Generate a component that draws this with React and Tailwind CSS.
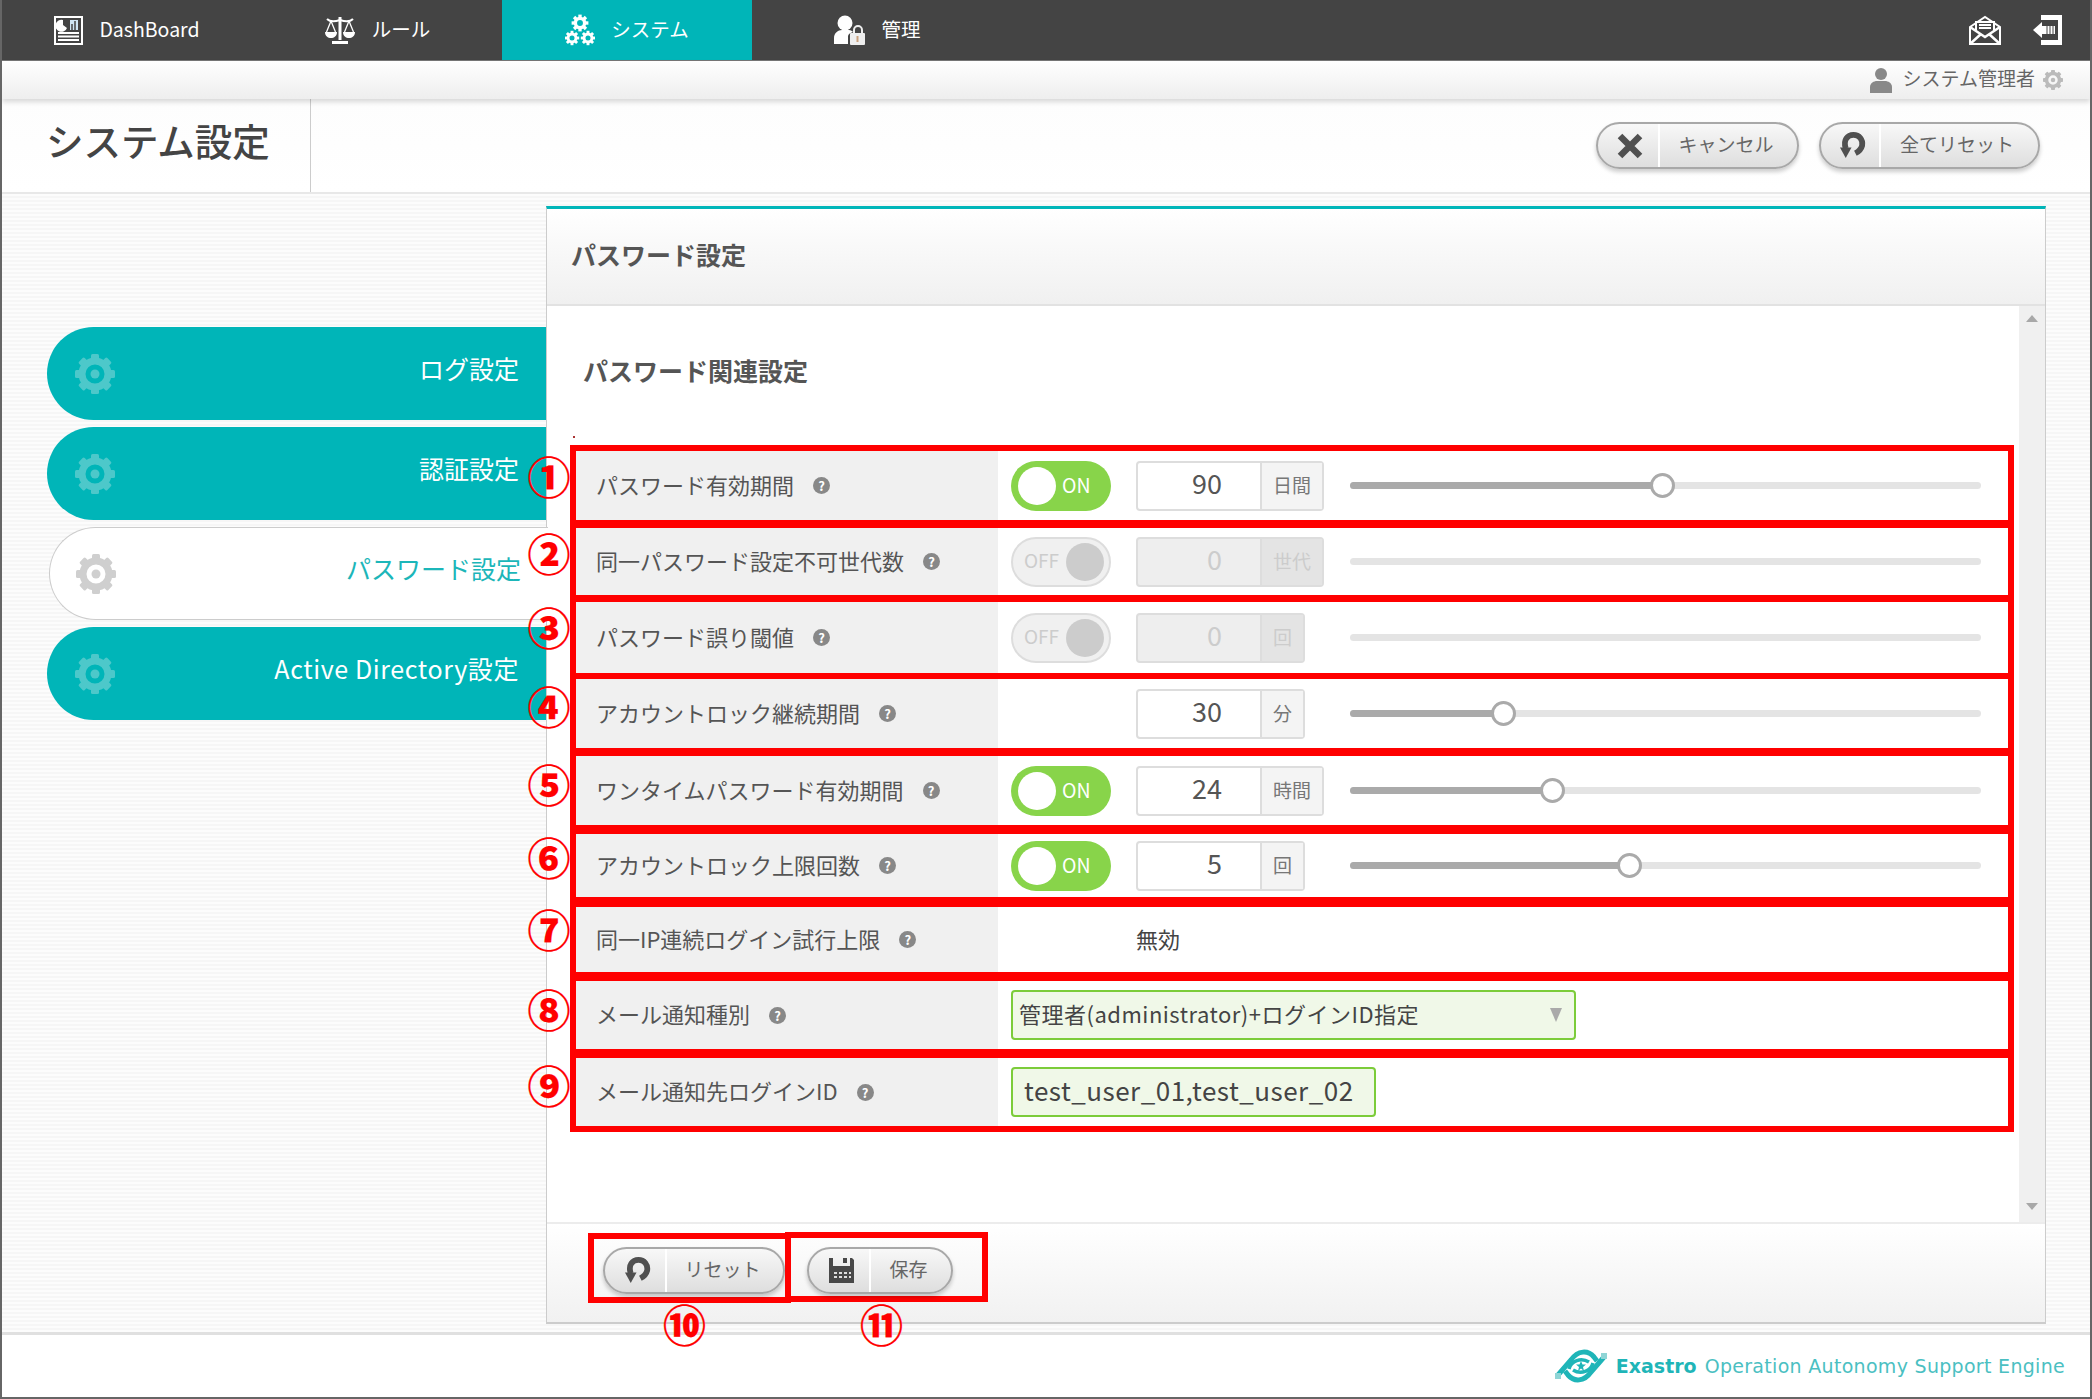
import React from "react";

const Gear = ({ className = "", color = "#fff", size = 40 }) => (
  <svg viewBox="-20 -20 40 40" width={size} height={size} className={className}>
    {[0, 45, 90, 135, 180, 225, 270, 315].map((a) => (
      <rect key={a} x="-4" y="-20" width="8" height="9" rx="1.5" fill={color} transform={`rotate(${a})`} />
    ))}
    <circle r="13" fill="none" stroke={color} strokeWidth="7" />
    <circle r="4.5" fill={color} />
  </svg>
);

const DashIcon = () => (
  <svg viewBox="0 0 29 29" width="29" height="29">
    <rect x="1" y="1" width="27" height="27" fill="#444" stroke="#fff" strokeWidth="2" />
    <path d="M11 4 A6 6 0 1 0 15 12 L11 9Z" fill="#fff" transform="translate(-2,0)" />
    <path d="M16 14h8V4h-8z" fill="#cfe6f5" />
    <path d="M18 14V8M21 14V5" stroke="#444" strokeWidth="1.5" />
    <path d="M4 17h21M4 20.500h21M4 24h21" stroke="#fff" strokeWidth="1.800" />
  </svg>
);

const ScaleIcon = () => (
  <svg viewBox="0 0 32 30" width="32" height="30" fill="none" stroke="#fff">
    <path d="M16 2v23" strokeWidth="3" />
    <path d="M3 4c3 3 7 3 13 1 6 2 10 2 13-1" strokeWidth="2" />
    <path d="M7 6 2.500 17M7 6l4.500 11M25 6l-4.500 11M25 6l4.500 11" strokeWidth="1.300" />
    <path d="M1 17h12c0 8-12 8-12 0zM19 17h12c0 8-12 8-12 0z" fill="#fff" stroke="none" />
    <path d="M8 26h16v3H8z" fill="#fff" stroke="none" />
  </svg>
);

const Gears = () => (
  <>
    {[0, 45, 90, 135, 180, 225, 270, 315].map((a) => (
      <rect key={a} x="-4" y="-20" width="8" height="9" fill="#fff" transform={`rotate(${a})`} />
    ))}
    <circle r="11" fill="none" stroke="#fff" strokeWidth="8" />
  </>
);

const TripleGear = () => (
  <svg viewBox="0 0 30 32" width="30" height="32">
    <g transform="translate(15 9) scale(.42)"><Gears /></g>
    <g transform="translate(7 24) scale(.36)"><Gears /></g>
    <g transform="translate(23 24) scale(.36)"><Gears /></g>
  </svg>
);

const AdminIcon = () => (
  <svg viewBox="0 0 32 30" width="32" height="30">
    <circle cx="12" cy="8" r="7.500" fill="#fff" />
    <path d="M1 29v-6c0-5 4-8 8-8h7c2 0 3 1 4 2-4 1-5 3-5 5v7z" fill="#fff" />
    <path d="M21 18v-3a4 4 0 0 1 8 0v3" fill="none" stroke="#eee" strokeWidth="2" />
    <rect x="17" y="18" width="15" height="12" rx="1" fill="#eee" />
    <rect x="23.500" y="21" width="2" height="6" fill="#c9a07c" />
  </svg>
);

const MailIcon = () => (
  <svg viewBox="0 0 32 30" width="32" height="30" fill="none" stroke="#fff" strokeWidth="2">
    <path d="M1 12 16 2l15 10v17H1z" fill="#444" />
    <path d="M7 15V7h18v8" fill="#444" />
    <path d="M10 10h12M10 13h12" strokeWidth="1.800" />
    <path d="M1 12l15 10 15-10M1 29l11-10M31 29 20 19" strokeWidth="2.500" />
  </svg>
);

const ExitIcon = () => (
  <svg viewBox="0 0 30 32" width="30" height="32">
    <path d="M8 1h21v30H8v-5h17V6H8z" fill="#fff" />
    <path d="M0 16 9 8v4h13v8H9v4z" fill="#fff" />
    <path d="M14 12v8M17 12v8M20 12v8" stroke="#444" strokeWidth="1" />
  </svg>
);

const PersonIcon = () => (
  <svg viewBox="0 0 22 26" width="22" height="26" fill="#888">
    <circle cx="11" cy="7" r="6" />
    <path d="M0 26v-6c0-4 4-6 7-6h8c3 0 7 2 7 6v6z" />
  </svg>
);

const ResetIcon = () => (
  <svg viewBox="0 0 28 30" width="27" height="29" fill="none">
    <path d="M7 18C4 9 9 4 15 4s10 5 9 11c-1 4-3 6-7 8" stroke="#505050" strokeWidth="6" />
    <path d="M1 17h12l-6 11z" fill="#505050" />
  </svg>
);

const CrossIcon = () => (
  <svg viewBox="0 0 26 28" width="26" height="28">
    <path d="M3 4l20 20M23 4 3 24" stroke="#505050" strokeWidth="6.500" />
  </svg>
);

const SaveIcon = () => (
  <svg viewBox="0 0 27 27" width="27" height="27">
    <path d="M1 1h4v8h17V1h2l2 2v23H1z" fill="#484848" />
    <path d="M15 1h4v5h-4z" fill="#484848" />
    <path d="M6 16h3M11 16h3M16 16h3M21 16h2M6 20h3M11 20h3M16 20h3M21 20h2" stroke="#ddd" strokeWidth="2" />
  </svg>
);

const Tri = ({ up }) => (
  <svg viewBox="0 0 12 7" width="12" height="7">
    <path d={up ? "M0 7 6 0l6 7z" : "M0 0h12L6 7z"} fill="#a8a8a8" />
  </svg>
);

const SelectArrow = () => (
  <svg viewBox="0 0 12 14" width="12" height="14">
    <path d="M0 0h12L6 14z" fill="#aaa" />
  </svg>
);

const Logo = () => (
  <svg viewBox="0 0 54 36" width="54" height="36" fill="none" stroke="#1fb5b8" strokeWidth="5">
    <path d="M4 27 17 12C24 2 34 2 40 9l3 4" />
    <path d="M50 9 37 24C30 34 20 34 14 27l-3-4" />
    <path d="M15 21c2-8 12-12 20-7" strokeWidth="3.500" />
    <path d="M39 15c-2 8-12 12-20 7" strokeWidth="3.500" />
    <path d="M27 13l1.500 3.500H32l-3 2.500 1 4-3-2.500-3 2.500 1-4-3-2.500h3.500z" fill="#1fb5b8" stroke="none" />
    <path d="M1 25h6v6H1zM47 5h6v6h-6z" fill="#8fd5d6" stroke="none" />
  </svg>
);

const TopTab = ({ icon, label, active }) => (
  <div className={`w-[250px] flex items-center justify-center gap-[16px] text-[19.500px] text-white ${active ? "bg-[#00b5b8]" : ""}`}>
    {icon}
    <span className="pb-[3px]">{label}</span>
  </div>
);

const PillButton = ({ icon, label, width, iconWidth }) => (
  <div className={`${width} h-[47px] flex rounded-full border-2 border-[#a8a8a8] bg-gradient-to-b from-[#f8f8f8] to-[#dedede] shadow-[0_3px_4px_rgba(0,0,0,0.2)] overflow-hidden`}>
    <div className={`${iconWidth} shrink-0 flex items-center justify-center border-r-2 border-white pl-1`}>{icon}</div>
    <div className="flex-1 flex items-center justify-center pr-[5px] pb-[3px] text-[19px] text-[#666]">{label}</div>
  </div>
);

const NavPill = ({ label, active, labelClass = "" }) =>
  active ? (
    <div className="relative z-10 h-[93px] ml-[2px] -mr-[2px] flex items-center justify-between pl-[26px] pr-[27px] rounded-l-full border border-r-0 border-[#ccc] bg-white">
      <Gear color="#cfcfcf" />
      <span className="pb-[10px] text-[25px] text-[#1cb6b9]">{label}</span>
    </div>
  ) : (
    <div className="h-[93px] flex items-center justify-between pl-[28px] pr-[27px] rounded-l-full bg-[#00b5b8]">
      <Gear color="#4dc8ca" />
      <span className={`pb-[10px] text-[25px] text-white ${labelClass}`}>{label}</span>
    </div>
  );

const Help = () => (
  <span className="w-[17px] h-[17px] rounded-full bg-[#888] text-white text-[13px] font-bold flex items-center justify-center leading-none shrink-0">?</span>
);

const Toggle = ({ on }) =>
  on ? (
    <div className="w-[100px] h-[50px] shrink-0 rounded-full bg-[#88d44a] flex items-center pl-[7px] gap-[6px]">
      <span className="w-[38px] h-[38px] rounded-full bg-white" />
      <span className="pb-[2px] text-[19.500px] text-white">ON</span>
    </div>
  ) : (
    <div className="w-[100px] h-[50px] shrink-0 rounded-full bg-[#f0f0f0] border-2 border-[#ddd] flex items-center justify-between pl-[11px] pr-[5px]">
      <span className="pb-[2px] text-[19px] text-[#ccc]">OFF</span>
      <span className="w-[38px] h-[38px] rounded-full bg-[#ccc]" />
    </div>
  );

const NumberBox = ({ value, unit, wide, disabled }) => (
  <div className={`${wide ? "w-[188px]" : "w-[169px]"} h-[50px] flex rounded-[4px] border-2 ${disabled ? "border-[#ddd] bg-[#eee]" : "border-[#ddd] bg-white"}`}>
    <div className={`w-[122px] shrink-0 flex items-center justify-end pr-[38px] pb-[4px] text-[27px] ${disabled ? "text-[#ccc]" : "text-[#555]"}`}>{value}</div>
    <div className={`flex-1 flex items-center justify-center border-l-2 border-[#ddd] text-[19px] ${disabled ? "bg-[#e4e4e4] text-[#ccc]" : "bg-[#f4f4f4] text-[#777]"}`}>{unit}</div>
  </div>
);

const Slider = ({ percent, disabled }) => (
  <div className="relative w-[631px] h-[7px] rounded-full bg-[#e4e4e4]">
    {!disabled && (
      <>
        <div className="h-full rounded-full bg-[#aaa]" style={{ width: `${percent}%` }} />
        <div className="absolute top-[-9px] w-[25px] h-[25px] -ml-[12px] rounded-full bg-white border-[3px] border-[#aaa]" style={{ left: `${percent}%` }} />
      </>
    )}
  </div>
);

const rows = [
  { label: "パスワード有効期間", n: "①", cls: "border-t-[6px] h-[75px]", mark: "top-[-1px]", toggle: true, value: "90", unit: "日間", wide: true, pct: 49.400 },
  { label: "同一パスワード設定不可世代数", n: "②", cls: "border-t-[8px] h-[75px]", mark: "top-[-1px]", toggle: false, value: "0", unit: "世代", wide: true, disabled: true },
  { label: "パスワード誤り閾値", n: "③", cls: "border-t-[7px] h-[78px]", mark: "top-[-1px]", toggle: false, value: "0", unit: "回", disabled: true },
  { label: "アカウントロック継続期間", n: "④", cls: "border-t-[6px] h-[75px]", mark: "top-[1px]", value: "30", unit: "分", pct: 24.200 },
  { label: "ワンタイムパスワード有効期間", n: "⑤", cls: "border-t-[8px] h-[77px]", mark: "top-[2px]", toggle: true, value: "24", unit: "時間", wide: true, pct: 32 },
  { label: "アカウントロック上限回数", n: "⑥", cls: "border-t-[9px] h-[72px]", mark: "top-[-3px]", toggle: true, value: "5", unit: "回", pct: 44.200 },
  { label: "同一IP連続ログイン試行上限", n: "⑦", cls: "border-t-[10px] h-[75px]", mark: "top-[-4px]", text: "無効" },
  { label: "メール通知種別", n: "⑧", cls: "border-t-[9px] h-[77px]", mark: "top-[2px]", select: "管理者(administrator)+ログインID指定" },
  { label: "メール通知先ログインID", n: "⑨", cls: "border-t-[9px] h-[83px] border-b-[6px]", mark: "top-[1px]", input: "test_user_01,test_user_02" },
];

const markText = "text-[43px] leading-[50px] font-black text-[#ff0000] [-webkit-text-stroke:0.2px_#ff0000]";

const Row = ({ r }) => (
  <div className={`relative flex border-x-[6px] border-[#ff0000] ${r.cls}`}>
    <span className={`absolute z-30 left-[-49px] ${r.mark} w-[44px] text-center ${markText}`}>{r.n}</span>
    <div className="w-[422px] shrink-0 bg-[#f0f0f0] flex items-center gap-[19px] pl-[20px] text-[22px] text-[#555]">
      <span className="pb-[3px]">{r.label}</span>
      <Help />
    </div>
    <div className="flex-1 flex items-center pl-[13px]">
      {r.value !== undefined && (
        <>
          <div className="w-[100px] shrink-0">{r.toggle !== undefined && <Toggle on={r.toggle} />}</div>
          <div className="w-[239px] shrink-0 pl-[25px]">
            <NumberBox value={r.value} unit={r.unit} wide={r.wide} disabled={r.disabled} />
          </div>
          <Slider percent={r.pct} disabled={r.disabled} />
        </>
      )}
      {r.text && <span className="pl-[125px] pb-[2px] text-[22px] text-[#444]">{r.text}</span>}
      {r.select && (
        <div className="w-[565px] h-[50px] rounded-[4px] border-2 border-[#7ccc3a] bg-[#f0f8e8] flex items-center justify-between pl-[6px] pr-[12px] text-[22px] tracking-[0.5px] text-[#444]">
          <span className="pb-[4px]">{r.select}</span>
          <SelectArrow />
        </div>
      )}
      {r.input && (
        <div className="w-[365px] h-[50px] rounded-[4px] border-2 border-[#7ccc3a] bg-[#f0f8e8] flex items-center pl-[11px] pb-[5px] text-[26px] tracking-[0.5px] text-[#444]">
          {r.input}
        </div>
      )}
    </div>
  </div>
);

export default function App() {
  return (
    <div className="w-[2092px] h-[1399px] flex flex-col overflow-hidden border-x-2 border-b-2 border-[#666] bg-white font-['Noto_Sans_CJK_JP','Liberation_Sans',sans-serif]">
      <header className="h-[61px] shrink-0 flex justify-between bg-[#444] border-b border-[#777]">
        <div className="flex">
          <TopTab icon={<DashIcon />} label="DashBoard" />
          <TopTab icon={<ScaleIcon />} label="ルール" />
          <TopTab icon={<TripleGear />} label="システム" active />
          <TopTab icon={<AdminIcon />} label="管理" />
        </div>
        <div className="flex items-center gap-[32px] pr-[27px]">
          <MailIcon />
          <ExitIcon />
        </div>
      </header>

      <div className="relative z-20 h-[38px] shrink-0 flex items-center justify-end gap-[8px] pr-[27px] bg-gradient-to-b from-white to-[#eeeeee] shadow-[0_3px_5px_rgba(0,0,0,0.15)] text-[19px] text-[#666]">
        <PersonIcon />
        <span className="ml-[3px] pb-[3px]">システム管理者</span>
        <Gear color="#bbb" size={20} />
      </div>

      <div className="h-[95px] shrink-0 flex justify-between items-stretch bg-gradient-to-b from-[#fdfdfd] to-white border-b-2 border-[#e8e8e8]">
        <div className="w-[309px] flex items-center pl-[44px] pb-[10px] border-r border-[#ccc] text-[37.500px] font-medium text-[#444]">
          システム設定
        </div>
        <div className="flex items-center gap-[20px] pr-[50px]">
          <PillButton icon={<CrossIcon />} label="キャンセル" width="w-[203px]" iconWidth="w-[62px]" />
          <PillButton icon={<ResetIcon />} label="全てリセット" width="w-[221px]" iconWidth="w-[60px]" />
        </div>
      </div>

      <div className="flex-1 min-h-0 flex pr-[44px] bg-[repeating-linear-gradient(180deg,#fcfcfc_0px,#fcfcfc_2px,#f6f6f6_2px,#f6f6f6_4px)]">
        <nav className="w-[544px] shrink-0 pl-[45px] pt-[133px] flex flex-col gap-[7px]">
          <NavPill label="ログ設定" />
          <NavPill label="認証設定" />
          <NavPill label="パスワード設定" active />
          <NavPill label="Active Directory設定" labelClass="tracking-[0.6px]" />
        </nav>

        <section className="flex-1 mt-[12px] mb-[8px] flex flex-col border-t-[3px] border-t-[#00b5b8] border-x border-b-2 border-x-[#ccc] border-b-[#ccc] bg-white">
          <div className="h-[97px] shrink-0 flex items-center pl-[24px] pb-[4px] bg-gradient-to-b from-white to-[#f0f0f0] border-b-2 border-[#e2e2e2] text-[25px] font-bold text-[#555]">
            パスワード設定
          </div>

          <div className="flex-1 min-h-0 flex">
            <div className="flex-1 pl-[23px] pr-[5px]">
              <h2 className="pt-[46px] pl-[13px] h-[139px] text-[25px] leading-[36px] font-bold text-[#555]">
                パスワード関連設定
              </h2>
              <div className="ml-[3px] -mt-[9px] mb-[7px] w-[2px] h-[2px] bg-[#a33]" />
              <div>
                {rows.map((r) => (
                  <Row key={r.n} r={r} />
                ))}
              </div>
            </div>
            <div className="w-[26px] shrink-0 bg-[#f0f0f0] flex flex-col items-center justify-between pt-[9px] pb-[12px]">
              <Tri up />
              <Tri />
            </div>
          </div>

          <div className="h-[100px] shrink-0 flex items-start pl-[41px] pt-[9px] bg-gradient-to-b from-white to-[#f1f1f1] border-t-2 border-[#ececec]">
            <div className="relative w-[203px] h-[70px] border-[6px] border-[#ff0000] flex items-center pl-[9px] pt-[5px]">
              <PillButton icon={<ResetIcon />} label="リセット" width="w-[182px]" iconWidth="w-[62px]" />
              <span className={`absolute top-[59px] left-[69px] ${markText}`}>⑩</span>
            </div>
            <div className="relative -ml-[6px] -mt-[1px] w-[203px] h-[70px] border-[6px] border-[#ff0000] flex items-center pl-[16px] pt-[7px]">
              <PillButton icon={<SaveIcon />} label="保存" width="w-[146px]" iconWidth="w-[62px]" />
              <span className={`absolute top-[60px] left-[69px] ${markText}`}>⑪</span>
            </div>
          </div>
        </section>
      </div>

      <footer className="h-[65px] shrink-0 flex items-center justify-end gap-[8px] pr-[25px] bg-white border-t-[3px] border-[#e0e0e0] font-['DejaVu_Sans',sans-serif] text-[19px] text-[#1fb5b8]">
        <Logo />
        <span className="font-bold">Exastro</span>
        <span className="text-[#4bbfc2] tracking-[0.3px]">Operation Autonomy Support Engine</span>
      </footer>
    </div>
  );
}
